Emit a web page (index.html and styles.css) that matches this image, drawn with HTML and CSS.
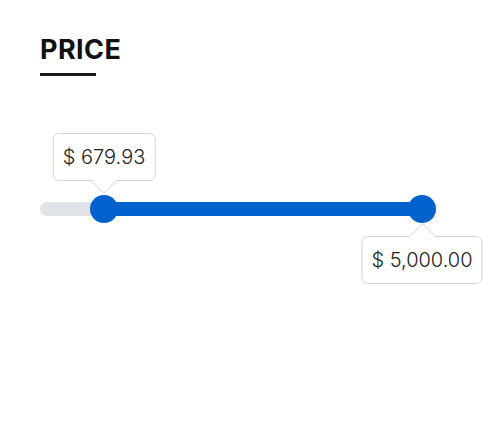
FILE: index.html
```html
<!DOCTYPE html>
<html lang="en">
<head>
<meta charset="utf-8">
<title>Price</title>
<link rel="stylesheet" href="styles.css">
</head>
<body>
<section class="widget">
  <h2 class="title">PRICE</h2>
  <div class="title-bar"></div>
  <div class="slider">
    <div class="track"></div>
    <div class="fill" style="left: calc(14px + (100% - 28px) * 0.136); right: 14px;"></div>
    <div class="thumb" style="left: calc((100% - 28px) * 0.136);">
      <div class="tip tip-above">$ 679.93</div>
    </div>
    <div class="thumb" style="left: calc(100% - 28px);">
      <div class="tip tip-below">$ 5,000.00</div>
    </div>
  </div>
</section>
</body>
</html>
```
FILE: styles.css
```css
html, body {
  margin: 0;
  padding: 0;
  background: #ffffff;
  min-height: 100vh;
}
body {
  font-family: "Inter", "Liberation Sans", sans-serif;
  color: #222;
}
.widget {
  padding: 36px 40px 100px;
  display: flex;
  flex-direction: column;
}
.title {
  margin: 0;
  font-size: 27px;
  line-height: 27px;
  font-weight: 700;
  color: #111;
  letter-spacing: 0.4px;
}
.title-bar {
  margin-top: 10px;
  width: 56px;
  height: 3px;
  background: #1a1a1a;
}
.slider {
  position: relative;
  margin-top: 126px;
  width: 396px;
  height: 14px;
}
.track {
  height: 14px;
  border-radius: 7px;
  background: #dfe2e6;
}
.fill {
  position: absolute;
  top: 0;
  height: 14px;
  background: #0062cc;
}
.thumb {
  position: absolute;
  top: -7px;
  width: 28px;
  height: 28px;
  border-radius: 50%;
  background: #0062cc;
}
.tip {
  position: absolute;
  left: 50%;
  transform: translateX(-50%);
  background: #fff;
  border: 1px solid #d4d4d4;
  border-radius: 6px;
  padding: 0 9px;
  height: 48px;
  line-height: 46px;
  font-size: 20px;
  font-weight: 300;
  color: #222;
  white-space: nowrap;
  box-sizing: border-box;
}
.tip::before, .tip::after {
  content: "";
  position: absolute;
  left: 50%;
  width: 0;
  height: 0;
  border-left: 14px solid transparent;
  border-right: 14px solid transparent;
  transform: translateX(-50%);
}
.tip-above {
  bottom: 42px;
}
.tip-above::before {
  top: 100%;
  border-top: 14px solid #d4d4d4;
}
.tip-above::after {
  top: calc(100% - 1px);
  border-top: 14px solid #fff;
}
.tip-below {
  top: 41px;
}
.tip-below::before {
  bottom: 100%;
  border-bottom: 14px solid #d4d4d4;
}
.tip-below::after {
  bottom: calc(100% - 1px);
  border-bottom: 14px solid #fff;
}
```
